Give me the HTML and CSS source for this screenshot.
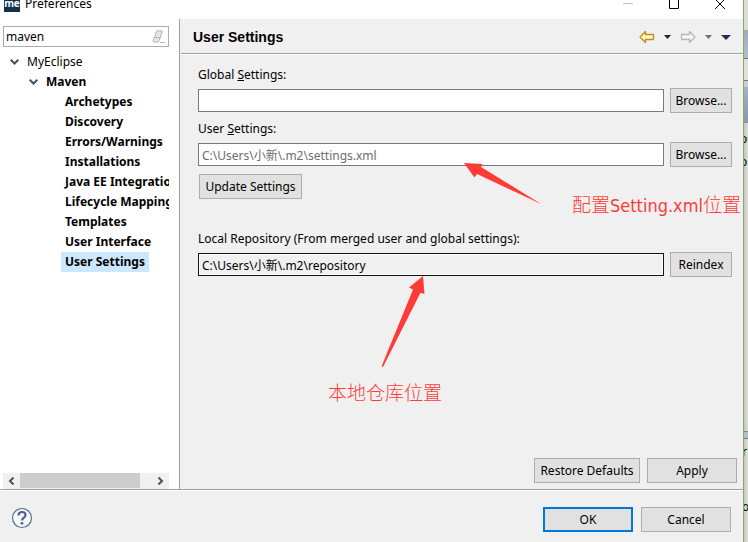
FILE: index.html
```html
<!DOCTYPE html>
<html lang="en">
<head>
    <meta charset="utf-8">
    <title>Preferences</title>
    <link rel="stylesheet" href="styles.css">
</head>
<body>
    <div class="dialog">
        <div class="titlebar">
            <span class="logo">me</span>
            <span class="title">Preferences</span>
            <button class="win-btn" aria-label="Minimize">
                <svg width="10" height="10" viewBox="0 0 10 10"><path d="M0 4.500h10" stroke="#c0c0c0"/></svg>
            </button>
            <button class="win-btn" aria-label="Maximize">
                <svg width="10" height="10" viewBox="0 0 10 10"><path d="M.5.5h9v9h-9z" fill="none" stroke="#000"/></svg>
            </button>
            <button class="win-btn" aria-label="Close">
                <svg width="10" height="10" viewBox="0 0 10 10"><path d="M0 0l10 10M10 0L0 10" stroke="#000"/></svg>
            </button>
        </div>

        <div class="main">
            <div class="sidebar">
                <div class="filter">
                    <input type="text" value="maven" aria-label="Filter">
                    <svg width="14" height="14" viewBox="0 0 14 14">
                        <path d="M4.500 1.500Q5 .8 6 .8h3.500q1 0 .7 1L7 11q-.4 1-1.300 1H2q-1.200 0-.8-1.200z" fill="#e6e6e6" stroke="#b4b4b4"/>
                        <path d="M2.500 7.500h5.500M8 12.500h5" fill="none" stroke="#b4b4b4"/>
                    </svg>
                </div>
                <ul class="tree">
                    <li class="level1"><svg class="chevron" width="9" height="6" viewBox="0 0 9 6"><path d="M.7.7l3.800 3.800L8.300.7"/></svg><span>MyEclipse</span></li>
                    <li class="level2"><svg class="chevron" width="9" height="6" viewBox="0 0 9 6"><path d="M.7.7l3.800 3.800L8.300.7"/></svg><span>Maven</span></li>
                    <li class="level3"><span>Archetypes</span></li>
                    <li class="level3"><span>Discovery</span></li>
                    <li class="level3"><span>Errors/Warnings</span></li>
                    <li class="level3"><span>Installations</span></li>
                    <li class="level3"><span>Java EE Integration</span></li>
                    <li class="level3"><span>Lifecycle Mappings</span></li>
                    <li class="level3"><span>Templates</span></li>
                    <li class="level3"><span>User Interface</span></li>
                    <li class="level3"><span class="selected">User Settings</span></li>
                </ul>
                <div class="scrollbar">
                    <button aria-label="Scroll left"><svg width="7" height="8" viewBox="0 0 7 8"><path d="M5.500.5L2 4l3.500 3.500"/></svg></button>
                    <div class="track"><div class="thumb"></div></div>
                    <button aria-label="Scroll right"><svg width="7" height="8" viewBox="0 0 7 8"><path d="M1.500.5L5 4 1.500 7.500"/></svg></button>
                </div>
            </div>

            <div class="page">
                <div class="page-header">
                    <h1>User Settings</h1>
                    <div class="toolbar">
                        <button aria-label="Back"><svg width="16" height="14" viewBox="0 0 16 14"><path d="M1 7l5.500-5.500v3H14q.5 0 .5.500v4q0 .5-.5.500H6.500v3z" fill="#fff6c8" stroke="#c08a1e" stroke-width="1.300" stroke-linejoin="round"/></svg></button>
                        <button aria-label="Back history"><svg width="7" height="4" viewBox="0 0 7 4"><path d="M0 0h7L3.500 4z" fill="#222"/></svg></button>
                        <button aria-label="Forward"><svg width="16" height="14" viewBox="0 0 16 14"><path d="M15 7L9.500 1.500v3H2q-.5 0-.5.500v4q0 .5.5.500h7.500v3z" fill="#f6f6f6" stroke="#b4b4b4" stroke-width="1.300" stroke-linejoin="round"/></svg></button>
                        <button aria-label="Forward history"><svg width="7" height="4" viewBox="0 0 7 4"><path d="M0 0h7L3.500 4z" fill="#707078"/></svg></button>
                        <button aria-label="Menu"><svg width="10" height="5" viewBox="0 0 10 5"><path d="M0 0h10L5 5z" fill="#35225c"/></svg></button>
                    </div>
                </div>

                <div class="form">
                    <label for="globalSettings">Global <u>S</u>ettings:</label>
                    <div class="row">
                        <input type="text" id="globalSettings">
                        <button class="btn">Browse...</button>
                    </div>
                    <label for="userSettings">User <u>S</u>ettings:</label>
                    <div class="row">
                        <input type="text" id="userSettings" class="muted" value="C:\Users\小新\.m2\settings.xml">
                        <button class="btn">Browse...</button>
                    </div>
                    <button class="btn update">Update Settings</button>
                    <label for="localRepo">Local Repository (From merged user and global settings):</label>
                    <div class="row">
                        <input type="text" id="localRepo" class="readonly" value="C:\Users\小新\.m2\repository" readonly>
                        <button class="btn">Reindex</button>
                    </div>
                </div>

                <div class="page-buttons">
                    <button class="btn restore">Restore Defaults</button>
                    <button class="btn wide">Apply</button>
                </div>

                <!-- notes drawn over the form -->
                <svg class="arrow arrow-settings" width="78" height="42" viewBox="0 0 78 42"><path d="M0 0l18.500 1-1.500 3 60.500 37.200L13 11l-2.500 3.500z" fill="#ff3b38"/></svg>
                <span class="note note-settings">配置<span class="latin">Setting.xml</span>位置</span>
                <svg class="arrow arrow-repo" width="44" height="92" viewBox="0 0 44 92"><path d="M42 0l1.500 18-4-1.200L2 91l-1.500-.5L32 13.500l-4-2z" fill="#ff3b38"/></svg>
                <span class="note note-repo">本地仓库位置</span>
            </div>
        </div>

        <div class="footer">
            <button class="help" aria-label="Help">
                <svg width="22" height="22" viewBox="0 0 22 22">
                    <circle cx="11" cy="11" r="9.500" fill="#f7f8fa" stroke="#596e93" stroke-width="1.200"/>
                    <path d="M7.500 8.500Q7.500 5 11 5t3.500 3q0 1.600-1.700 2.700Q11 11.800 11 13.500" fill="none" stroke="#4b6290" stroke-width="2.200"/>
                    <circle cx="11" cy="16.300" r="1.400" fill="#4b6290"/>
                </svg>
            </button>
            <button class="btn wide default">OK</button>
            <button class="btn wide">Cancel</button>
        </div>
    </div>

    <!-- edge of the window behind the dialog -->
    <div class="behind" aria-hidden="true">
        <div class="behind-title"></div>
        <div class="behind-bar"></div>
        <div class="behind-field"></div>
        <div class="behind-tabs"></div>
        <div class="behind-view">
            <span>or</span>
            <span>o</span>
        </div>
        <div class="behind-sash"></div>
        <div class="behind-view lower">
            <span>r</span>
            <span>o</span>
        </div>
    </div>
</body>
</html>
```

FILE: styles.css
```css
:root {
    --face: #f0f0f0;
    --line: #a0a0a0;
    --button: #e1e1e1;
    --button-border: #adadad;
    --accent: #0078d7;
    --note: #ff3b38;
}

* {
    box-sizing: border-box;
}

body {
    margin: 0;
    display: flex;
    min-height: 100vh;
    overflow: hidden;
    background: var(--face);
    color: #000;
    font: 12px/20px "Noto Sans", "Noto Sans CJK SC", sans-serif;
}

button, input {
    font: inherit;
    color: inherit;
}

button {
    padding: 0;
    border: none;
    background: none;
}

svg {
    display: block;
}

.dialog {
    flex: 1;
    min-width: 0;
    display: flex;
    flex-direction: column;
    border-right: 1px solid #7fae5c;
}

/* title bar, partly scrolled off the top */
.titlebar {
    display: flex;
    align-items: center;
    height: 31px;
    margin-top: -12px;
    padding-left: 4px;
    background: #fff;
}

.logo {
    width: 16px;
    height: 16px;
    background: #14304f;
    color: #fff;
    font-size: 10px;
    font-weight: 700;
    line-height: 14px;
    text-align: center;
}

.title {
    flex: 1;
    margin-left: 5px;
}

.win-btn {
    width: 46px;
    height: 30px;
    display: flex;
    align-items: center;
    justify-content: center;
}

.main {
    flex: 1;
    display: flex;
}

.sidebar {
    width: 180px;
    display: flex;
    flex-direction: column;
    padding: 7px 10px 0 3px;
    border-right: 1px solid var(--line);
    background: #fff;
}

.filter {
    display: flex;
    align-items: center;
    height: 21px;
    padding-right: 2px;
    border: 1px solid #abadb3;
}

.filter input {
    flex: 1;
    min-width: 0;
    height: 19px;
    padding: 0 2px;
    border: none;
    outline: none;
    background: none;
}

.tree {
    flex: 1;
    margin: 5px 0 0;
    padding: 0;
    list-style: none;
    overflow: hidden;
    white-space: nowrap;
}

.tree li {
    display: flex;
    align-items: center;
    height: 20px;
}

.tree .level1 {
    padding-left: 7px;
}

.tree .level2 {
    padding-left: 26px;
    font-weight: 700;
}

.tree .level3 {
    padding-left: 58px;
    font-weight: 700;
}

.tree span {
    padding: 0 4px;
}

.level1 span, .level2 span {
    margin-left: 4px;
}

.chevron {
    fill: none;
    stroke: #505050;
    stroke-width: 2;
}

.selected {
    background: #cce8ff;
}

.scrollbar {
    display: flex;
    height: 16px;
    background: var(--face);
}

.scrollbar button {
    width: 17px;
    display: flex;
    align-items: center;
    justify-content: center;
}

.scrollbar path {
    fill: none;
    stroke: #505050;
    stroke-width: 2;
}

.track {
    flex: 1;
}

.thumb {
    width: 91%;
    height: 15px;
    background: #cdcdcd;
}

.page {
    position: relative;
    flex: 1;
    min-width: 0;
    display: flex;
    flex-direction: column;
    margin-left: 1px;
}

.page-header {
    display: flex;
    align-items: center;
    justify-content: space-between;
    height: 35px;
    padding: 2px 12px 0 12px;
    border-bottom: 1px solid var(--line);
    box-shadow: 0 1px #fff;
}

.page-header h1 {
    margin: 0;
    font: 700 14px/20px "Liberation Sans", sans-serif;
}

.toolbar {
    display: flex;
    align-items: center;
    gap: 9px;
}

.form {
    flex: 1;
    padding: 11px 11px 0 17px;
}

.form label {
    display: block;
    margin-bottom: 3px;
}

.row {
    display: flex;
    align-items: center;
    gap: 6px;
    margin-bottom: 6px;
}

.row input {
    flex: 1;
    min-width: 0;
    height: 23px;
    padding: 0 3px;
    border: 1px solid #7a7a7a;
    background: #fff;
}

.row .muted {
    color: #6d6d6d;
}

.row .readonly {
    border-color: #111;
    background: var(--face);
    box-shadow: inset 0 0 0 1px #fff;
}

.row .btn {
    width: 62px;
}

.btn {
    height: 25px;
    border: 1px solid var(--button-border);
    background: var(--button);
    white-space: nowrap;
}

.btn:hover {
    border-color: var(--accent);
    background: #e5f1fb;
}

.update {
    display: block;
    width: 103px;
    margin: 7px 0 30px 1px;
}

.page-buttons {
    display: flex;
    justify-content: flex-end;
    gap: 7px;
    padding: 0 6px 6px;
}

.restore {
    width: 106px;
}

.wide {
    width: 90px;
}

.footer {
    display: flex;
    align-items: flex-start;
    gap: 8px;
    padding: 17px 12px 10px 11px;
    border-top: 1px solid var(--line);
    box-shadow: inset 0 1px #fff;
}

.help {
    margin-right: auto;
}

.btn.default {
    border: 2px solid var(--accent);
}

.arrow, .note {
    position: absolute;
}

.note {
    color: var(--note);
    font-size: 19px;
    font-weight: 300;
    line-height: 24px;
    white-space: nowrap;
}

.latin {
    font-family: "DejaVu Sans Condensed", "Noto Sans", sans-serif;
    font-size: 18px;
    font-weight: 400;
}

.arrow-settings {
    left: 283px;
    top: 144px;
}

.note-settings {
    right: 2px;
    top: 174px;
}

.arrow-repo {
    left: 200px;
    top: 257px;
}

.note-repo {
    left: 147px;
    top: 362px;
}

.behind {
    width: 4px;
    display: flex;
    flex-direction: column;
    overflow: hidden;
    background: #d4d4d4;
}

.behind-title {
    height: 30px;
    background: #dcdcdc;
}

.behind-bar {
    height: 28px;
    background: linear-gradient(#9dabbd, #b4bfcc);
}

.behind-field {
    height: 23px;
    border: solid #707680;
    border-width: 1px 0;
    background: #e0e0e0;
}

.behind-tabs {
    height: 42px;
    border-top: 6px solid #c9ced5;
    background: linear-gradient(#a3b2c5, #8796a9);
}

.behind-view {
    height: 308px;
    padding-top: 6px;
    background: linear-gradient(90deg, #c4c4c4, #dedede);
}

.behind-view span {
    display: block;
    margin-bottom: 3px;
    text-indent: -4px;
}

.behind-sash {
    height: 8px;
    border: solid #7c8796;
    border-width: 1px 0;
    background: #b4bfcc;
}

.lower {
    flex: 1;
    height: auto;
    padding-top: 3px;
}

.lower span {
    margin-bottom: 35px;
    text-indent: -2px;
}

.lower span:last-child {
    margin-bottom: 0;
}
```
